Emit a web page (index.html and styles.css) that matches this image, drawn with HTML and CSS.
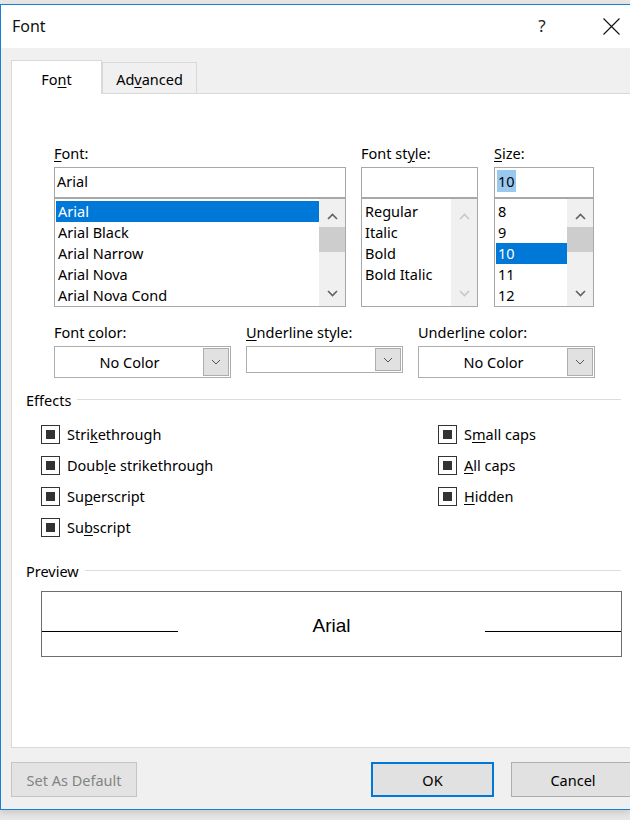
FILE: index.html
```html
<!DOCTYPE html>
<html lang="en">
<head>
<meta charset="utf-8">
<title>Font</title>
<link rel="stylesheet" href="styles.css">
</head>
<body>
<div class="window">
  <div class="titlebar">
    <span class="title">Font</span>
    <span class="help">?</span>
    <span class="close">
      <svg width="17" height="17" viewBox="0 0 17 17"><path d="M0.5 0.5 L16.5 16.5 M16.5 0.5 L0.5 16.5" stroke="#111" stroke-width="1.1" fill="none"/></svg>
    </span>
  </div>
  <div class="client">
    <div class="tabs">
      <div class="tab active">Fo<u>n</u>t</div>
      <div class="tab">Ad<u>v</u>anced</div>
    </div>
    <div class="panel">
      <div class="font-grid">
        <div class="col col-font">
          <div class="label"><u>F</u>ont:</div>
          <div class="input">Arial</div>
          <div class="list">
            <div class="items">
              <div class="item sel">Arial</div>
              <div class="item">Arial Black</div>
              <div class="item">Arial Narrow</div>
              <div class="item">Arial Nova</div>
              <div class="item">Arial Nova Cond</div>
            </div>
            <div class="scroll">
              <div class="sbtn up"><svg width="11" height="7" viewBox="0 0 11 7"><path d="M1 6 L5.5 1.5 L10 6" stroke="#606060" stroke-width="1.6" fill="none"/></svg></div>
              <div class="track"><div class="thumb"></div></div>
              <div class="sbtn down"><svg width="11" height="7" viewBox="0 0 11 7"><path d="M1 1 L5.5 5.5 L10 1" stroke="#606060" stroke-width="1.6" fill="none"/></svg></div>
            </div>
          </div>
        </div>
        <div class="col col-style">
          <div class="label">Font st<u>y</u>le:</div>
          <div class="input"></div>
          <div class="list">
            <div class="items">
              <div class="item">Regular</div>
              <div class="item">Italic</div>
              <div class="item">Bold</div>
              <div class="item">Bold Italic</div>
            </div>
            <div class="scroll">
              <div class="sbtn up"><svg width="11" height="7" viewBox="0 0 11 7"><path d="M1 6 L5.5 1.5 L10 6" stroke="#c8c8c8" stroke-width="1.6" fill="none"/></svg></div>
              <div class="track"></div>
              <div class="sbtn down"><svg width="11" height="7" viewBox="0 0 11 7"><path d="M1 1 L5.5 5.5 L10 1" stroke="#c8c8c8" stroke-width="1.6" fill="none"/></svg></div>
            </div>
          </div>
        </div>
        <div class="col col-size">
          <div class="label"><u>S</u>ize:</div>
          <div class="input"><span class="hl">10</span></div>
          <div class="list">
            <div class="items">
              <div class="item">8</div>
              <div class="item">9</div>
              <div class="item sel">10</div>
              <div class="item">11</div>
              <div class="item">12</div>
            </div>
            <div class="scroll">
              <div class="sbtn up"><svg width="11" height="7" viewBox="0 0 11 7"><path d="M1 6 L5.5 1.5 L10 6" stroke="#606060" stroke-width="1.6" fill="none"/></svg></div>
              <div class="track"><div class="thumb"></div></div>
              <div class="sbtn down"><svg width="11" height="7" viewBox="0 0 11 7"><path d="M1 1 L5.5 5.5 L10 1" stroke="#606060" stroke-width="1.6" fill="none"/></svg></div>
            </div>
          </div>
        </div>
      </div>

      <div class="dropdowns">
        <div class="dd-col dd-color">
          <div class="label">Font <u>c</u>olor:</div>
          <div class="combo tall">
            <span class="combo-text">No Color</span>
            <span class="combo-btn"><svg width="10" height="6" viewBox="0 0 10 6"><path d="M1 1 L5 5 L9 1" stroke="#555" stroke-width="1" fill="none"/></svg></span>
          </div>
        </div>
        <div class="dd-col dd-ustyle">
          <div class="label"><u>U</u>nderline style:</div>
          <div class="combo short">
            <span class="combo-text"></span>
            <span class="combo-btn"><svg width="10" height="6" viewBox="0 0 10 6"><path d="M1 1 L5 5 L9 1" stroke="#555" stroke-width="1" fill="none"/></svg></span>
          </div>
        </div>
        <div class="dd-col dd-ucolor">
          <div class="label">Underl<u>i</u>ne color:</div>
          <div class="combo tall">
            <span class="combo-text">No Color</span>
            <span class="combo-btn"><svg width="10" height="6" viewBox="0 0 10 6"><path d="M1 1 L5 5 L9 1" stroke="#555" stroke-width="1" fill="none"/></svg></span>
          </div>
        </div>
      </div>

      <div class="group-head"><span>Effects</span><span class="rule"></span></div>
      <div class="effects">
        <div class="effects-col left">
          <div class="check"><span class="box"></span><span>Stri<u>k</u>ethrough</span></div>
          <div class="check"><span class="box"></span><span>Doub<u>l</u>e strikethrough</span></div>
          <div class="check"><span class="box"></span><span>Su<u>p</u>erscript</span></div>
          <div class="check"><span class="box"></span><span>Su<u>b</u>script</span></div>
        </div>
        <div class="effects-col right">
          <div class="check"><span class="box"></span><span>S<u>m</u>all caps</span></div>
          <div class="check"><span class="box"></span><span><u>A</u>ll caps</span></div>
          <div class="check"><span class="box"></span><span><u>H</u>idden</span></div>
        </div>
      </div>

      <div class="group-head preview-head"><span>Preview</span><span class="rule"></span></div>
      <div class="preview">
        <span class="pline"></span>
        <span class="ptext">Arial</span>
        <span class="pline"></span>
      </div>
    </div>

    <div class="buttons">
      <div class="btn disabled">Set As Default</div>
      <div class="btn ok">OK</div>
      <div class="btn cancel">Cancel</div>
    </div>
  </div>
</div>
</body>
</html>
```

FILE: styles.css
```css
html, body {
  margin: 0;
  padding: 0;
  overflow: hidden;
  width: 630px;
  height: 820px;
}
body {
  background: #e6e6e6;
  font-family: "Noto Sans", "Open Sans", sans-serif;
  font-size: 14.5px;
  color: #000;
}
u {
  text-decoration: underline;
  text-decoration-thickness: 1px;
  text-underline-offset: 2px;
}
.window {
  margin-top: 4px;
  width: 629px;
  border-left: 1px solid #1a7fd4;
  border-top: 1px solid #1a7fd4;
  border-bottom: 1px solid #1a7fd4;
  box-shadow: 0 3px 6px rgba(0,0,0,0.12);
}
.titlebar {
  height: 43px;
  background: #fff;
  display: flex;
  align-items: center;
  padding-left: 11px;
}
.title {
  font-size: 16px;
  color: #111;
  margin-top: -1px;
}
.help {
  margin-left: auto;
  width: 46px;
  text-align: center;
  font-size: 17px;
  color: #222;
  margin-top: -2px;
}
.close {
  width: 38px;
  margin-left: 27px;
  display: flex;
  justify-content: center;
  margin-top: -1px;
}
.client {
  background: #f0f0f0;
  padding-top: 12px;
  padding-bottom: 12px;
}
.tabs {
  display: flex;
  align-items: flex-end;
  margin-left: 10px;
  height: 33px;
}
.tab {
  box-sizing: border-box;
  border: 1px solid #d9d9d9;
  border-bottom: none;
  background: #f0f0f0;
  width: 95px;
  height: 31px;
  text-align: center;
  padding-top: 6px;
  line-height: 20px;
}
.tab.active {
  width: 91px;
  height: 34px;
  background: #fff;
  margin-bottom: -1px;
  padding-top: 8px;
  position: relative;
  z-index: 1;
}
.panel {
  margin-left: 10px;
  height: 655px;
  box-sizing: border-box;
  background: #fff;
  border: 1px solid #d9d9d9;
  border-right: none;
  padding-left: 14px;
  padding-top: 49px;
}
.label {
  height: 20px;
  line-height: 20px;
  margin-bottom: 4px;
  white-space: nowrap;
}
.font-grid {
  display: flex;
  margin-left: 28px;
}
.col-font { width: 292px; }
.col-style { width: 117px; margin-left: 15px; }
.col-size { width: 100px; margin-left: 16px; }
.input {
  box-sizing: border-box;
  height: 31px;
  border: 1px solid #a8a8a8;
  padding: 2px 0 0 2px;
  line-height: 22px;
}
.hl {
  background: #99c9ef;
  padding: 0 1px;
  display: inline-block;
  line-height: 22px;
}
.list {
  box-sizing: border-box;
  height: 109px;
  border: 1px solid #a8a8a8;
  display: flex;
}
.items {
  flex: 1;
  padding: 2px 0 0 1px;
  overflow: hidden;
}
.item {
  height: 21px;
  line-height: 21px;
  padding-left: 2px;
  white-space: nowrap;
}
.item.sel {
  background: #0078d7;
  color: #fff;
}
.scroll {
  width: 26px;
  background: #f0f0f0;
  display: flex;
  flex-direction: column;
}
.sbtn {
  height: 28px;
  display: flex;
  justify-content: center;
}
.sbtn.up svg { margin-top: 14px; }
.sbtn.down { align-items: flex-start; }
.sbtn.down svg { margin-top: 12px; }
.track { flex: 1; }
.thumb {
  height: 25px;
  background: #cdcdcd;
}
.dropdowns {
  display: flex;
  margin-left: 28px;
  margin-top: 15px;
}
.dd-color, .dd-ucolor { width: 177px; }
.dd-ustyle { width: 157px; margin: 0 15px; }
.combo {
  box-sizing: border-box;
  border: 1px solid #adadad;
  background: #fff;
  display: flex;
  padding: 1px;
}
.combo.tall { height: 32px; }
.combo.short { height: 27px; }
.combo-text {
  flex: 1;
  text-align: center;
  line-height: 29px;
}
.combo-btn {
  box-sizing: border-box;
  width: 26px;
  background: #e1e1e1;
  border: 1px solid #adadad;
  display: flex;
  align-items: center;
  justify-content: center;
}
.group-head {
  display: flex;
  align-items: center;
  width: 595px;
  height: 20px;
  line-height: 20px;
  margin-top: 12px;
}
.rule {
  flex: 1;
  height: 1px;
  background: #dcdcdc;
  margin-left: 6px;
  margin-top: -1px;
}
.effects {
  display: flex;
  margin-top: 9px;
  margin-left: 15px;
}
.effects-col.left { width: 397px; }
.check {
  height: 31px;
  display: flex;
  align-items: center;
  white-space: nowrap;
}
.check span:last-child { margin-top: -1px; }
.box {
  box-sizing: border-box;
  width: 19px;
  height: 19px;
  border: 1px solid #333;
  background: #fff;
  margin-right: 7px;
  display: flex;
  align-items: center;
  justify-content: center;
}
.box::after {
  content: "";
  width: 9px;
  height: 9px;
  background: #333;
}
.preview-head { margin-top: 18px; }
.preview {
  box-sizing: border-box;
  margin-left: 15px;
  margin-top: 10px;
  width: 581px;
  height: 66px;
  border: 1px solid #6e6e6e;
  display: flex;
  align-items: baseline;
  justify-content: space-between;
  padding-top: 22px;
}
.pline {
  width: 136px;
  height: 1px;
  background: #000;
}
.ptext {
  font-family: "Liberation Sans", Arial, sans-serif;
  font-size: 19px;
  line-height: 24px;
  color: #000;
}
.buttons {
  display: flex;
  margin-top: 14px;
  padding-left: 10px;
}
.btn {
  box-sizing: border-box;
  height: 35px;
  width: 123px;
  background: #e1e1e1;
  border: 1px solid #adadad;
  display: flex;
  align-items: center;
  justify-content: center;
}
.btn.disabled {
  width: 126px;
  color: #838383;
  border-color: #c4c4c4;
  background: #e3e3e3;
}
.btn.ok {
  margin-left: auto;
  border: 2px solid #0078d7;
}
.btn.cancel {
  margin-left: 17px;
  width: 119px;
  border-right: none;
  padding-left: 4px;
}
```
